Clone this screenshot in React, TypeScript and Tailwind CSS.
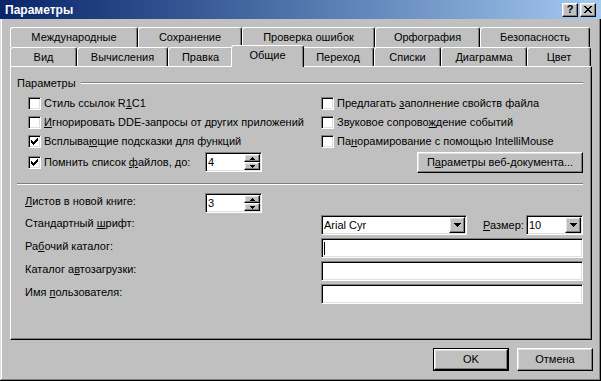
import React from "react";

const raised =
  "border border-t-white border-l-white border-r-black border-b-black shadow-[inset_-1px_-1px_#808080,inset_1px_1px_#dfdfdf]";
const sunken =
  "border border-t-[#808080] border-l-[#808080] border-r-white border-b-white shadow-[inset_1px_1px_#000,inset_-1px_-1px_#dfdfdf]";

function CheckMark() {
  const rects: [number, number, number][] = [
    [6, 0, 1],
    [5, 1, 2],
    [0, 2, 1],
    [4, 2, 3],
    [0, 3, 2],
    [3, 3, 3],
    [0, 4, 5],
    [1, 5, 3],
    [2, 6, 1],
  ];
  return (
    <svg width="7" height="7" viewBox="0 0 7 7" shapeRendering="crispEdges">
      {rects.map(([x, y, w], i) => (
        <rect key={i} x={x} y={y} width={w} height={1} fill="#000" />
      ))}
    </svg>
  );
}

function Check({ checked }: { checked?: boolean }) {
  return (
    <div className={`w-[13px] h-[13px] bg-white shrink-0 flex items-center justify-center ${sunken}`}>
      {checked && <CheckMark />}
    </div>
  );
}

function CheckRow({ checked, children }: { checked?: boolean; children: React.ReactNode }) {
  return (
    <div className="flex items-center gap-[3px] h-[19px]">
      <Check checked={checked} />
      <span className="whitespace-nowrap">{children}</span>
    </div>
  );
}

function TriUp() {
  return (
    <svg width="5" height="3" viewBox="0 0 5 3" shapeRendering="crispEdges">
      <rect x="2" y="0" width="1" height="1" fill="#000" />
      <rect x="1" y="1" width="3" height="1" fill="#000" />
      <rect x="0" y="2" width="5" height="1" fill="#000" />
    </svg>
  );
}
function TriDown() {
  return (
    <svg width="5" height="3" viewBox="0 0 5 3" shapeRendering="crispEdges">
      <rect x="0" y="0" width="5" height="1" fill="#000" />
      <rect x="1" y="1" width="3" height="1" fill="#000" />
      <rect x="2" y="2" width="1" height="1" fill="#000" />
    </svg>
  );
}
function BigTriDown() {
  return (
    <svg width="7" height="4" viewBox="0 0 7 4" shapeRendering="crispEdges">
      <rect x="0" y="0" width="7" height="1" fill="#000" />
      <rect x="1" y="1" width="5" height="1" fill="#000" />
      <rect x="2" y="2" width="3" height="1" fill="#000" />
      <rect x="3" y="3" width="1" height="1" fill="#000" />
    </svg>
  );
}

function Spin({ value }: { value: string }) {
  return (
    <div className={`w-[57px] h-[20px] bg-white flex p-[1px] shrink-0 ${sunken}`}>
      <div className="flex-1 pl-[1px] leading-[16px]">{value}</div>
      <div className="flex flex-col w-[16px]">
        <div className={`h-[8px] bg-[#c0c0c0] flex items-center justify-center ${raised}`}>
          <TriUp />
        </div>
        <div className={`h-[8px] bg-[#c0c0c0] flex items-center justify-center ${raised}`}>
          <TriDown />
        </div>
      </div>
    </div>
  );
}

function Combo({ value, w }: { value: string; w: string }) {
  return (
    <div className={`${w} h-[20px] bg-white flex p-[1px] shrink-0 ${sunken}`}>
      <div className="flex-1 pl-[1px] leading-[16px] whitespace-nowrap">{value}</div>
      <div className={`w-[16px] h-[16px] bg-[#c0c0c0] flex items-center justify-center ${raised}`}>
        <BigTriDown />
      </div>
    </div>
  );
}

function TextField({ caret }: { caret?: boolean }) {
  return (
    <div className={`w-[262px] h-[20px] bg-white flex items-center p-[1px] shrink-0 ${sunken}`}>
      {caret && <div className="ml-[1px] w-[1px] h-[13px] bg-black" />}
    </div>
  );
}

function Tab({
  w,
  children,
  h,
}: {
  w: string;
  h: string;
  children: React.ReactNode;
}) {
  return (
    <div
      className={`${w} ${h} shrink-0 bg-[#c0c0c0] flex items-center justify-center rounded-t-[3px] border-t border-l border-t-white border-l-white border-r border-r-black shadow-[inset_-1px_0_#808080] whitespace-nowrap`}
    >
      {children}
    </div>
  );
}

function Label({ w, children }: { w: string; children: React.ReactNode }) {
  return <div className={`${w} shrink-0 whitespace-nowrap pb-[4px]`}>{children}</div>;
}

export default function App() {
  return (
    <div className="w-[601px] h-[381px] bg-[#c0c0c0] text-black text-[11px] leading-[13px] font-['Liberation_Sans',Arial,sans-serif] flex flex-col shadow-[inset_-1px_-1px_#000,inset_1px_1px_#dfdfdf,inset_-2px_-2px_#808080,inset_2px_2px_#fff] overflow-hidden">
      {/* Title bar */}
      <div className="h-[19px] shrink-0 flex items-center bg-gradient-to-r from-[#0a246a] to-[#a6caf0] pl-[5px] pr-[5px]">
        <span className="text-white font-bold text-[12px] leading-[14px] flex-1">Параметры</span>
        <div className={`w-[16px] h-[14px] bg-[#c0c0c0] flex items-center justify-center ${raised}`}>
          <span className="font-bold text-[11px] leading-[11px]">?</span>
        </div>
        <div className={`ml-[2px] w-[16px] h-[14px] bg-[#c0c0c0] flex items-center justify-center ${raised}`}>
          <svg width="8" height="7" viewBox="0 0 8 7" shapeRendering="crispEdges">
            <path d="M0 0h2v1h-2zM6 0h2v1h-2zM1 1h2v1h-2zM5 1h2v1h-2zM2 2h4v1h-4zM3 3h2v1h-2zM2 4h4v1h-4zM1 5h2v1h-2zM5 5h2v1h-2zM0 6h2v1h-2zM6 6h2v1h-2z" fill="#000" />
          </svg>
        </div>
      </div>

      {/* Tabs row 1 */}
      <div className="mt-[8px] ml-[10px] flex h-[20px]">
        <Tab w="w-[128px]" h="h-[20px]">Международные</Tab>
        <Tab w="w-[104px]" h="h-[20px]">Сохранение</Tab>
        <Tab w="w-[133px]" h="h-[20px]">Проверка ошибок</Tab>
        <Tab w="w-[105px]" h="h-[20px]">Орфография</Tab>
        <Tab w="w-[110px]" h="h-[20px]">Безопасность</Tab>
      </div>
      {/* Tabs row 2 */}
      <div className="ml-[10px] flex items-end h-[19px]">
        <Tab w="w-[67px]" h="h-[19px]">Вид</Tab>
        <Tab w="w-[91px]" h="h-[19px]">Вычисления</Tab>
        <Tab w="w-[65px]" h="h-[19px]">Правка</Tab>
        <div className="relative z-10 -mx-[2px] mb-[-1px] w-[73px] h-[22px] shrink-0 bg-[#c0c0c0] flex items-start justify-center pt-[3px] rounded-t-[3px] border-t border-l border-t-white border-l-white border-r border-r-black shadow-[inset_-1px_0_#808080]">
          Общие
        </div>
        <Tab w="w-[72px]" h="h-[19px]">Переход</Tab>
        <Tab w="w-[67px]" h="h-[19px]">Списки</Tab>
        <Tab w="w-[86px]" h="h-[19px]">Диаграмма</Tab>
        <Tab w="w-[64px]" h="h-[19px]">Цвет</Tab>
      </div>

      {/* Panel */}
      <div className="ml-[10px] w-[582px] h-[274px] shrink-0 border border-t-white border-l-white border-r-black border-b-black shadow-[inset_-1px_-1px_#808080] flex flex-col">
        <div className="mt-[9px] flex items-center h-[14px] pl-[6px] pr-[8px]">
          <span>Параметры</span>
          <div className="flex-1 ml-[5px] h-[2px] border-t border-b border-t-[#808080] border-b-white" />
        </div>

        <div className="mt-[4px] flex pl-[17px] pr-[8px]">
          <div className="w-[293px] flex flex-col">
            <CheckRow>
              Стиль ссылок R<u>1</u>C1
            </CheckRow>
            <CheckRow>
              <u>И</u>гнорировать DDE-запросы от других приложений
            </CheckRow>
            <CheckRow checked>
              Всплыва<u>ю</u>щие подсказки для функций
            </CheckRow>
            <div className="flex items-center h-[22px]">
              <div className="w-[177px] flex items-center gap-[3px]">
                <Check checked />
                <span className="whitespace-nowrap">
                  Помнить список <u>ф</u>айлов, до:
                </span>
              </div>
              <Spin value="4" />
            </div>
          </div>
          <div className="flex-1 flex flex-col">
            <CheckRow>
              Предлагать <u>з</u>аполнение свойств файла
            </CheckRow>
            <CheckRow>
              Звуковое сопрово<u>ж</u>дение событий
            </CheckRow>
            <CheckRow>
              Па<u>н</u>орамирование с помощью IntelliMouse
            </CheckRow>
            <div className="flex items-center justify-end h-[22px]">
              <div className={`w-[166px] h-[21px] flex items-center justify-center ${raised}`}>
                П<u>а</u>раметры веб-документа...
              </div>
            </div>
          </div>
        </div>

        <div className="mt-[10px] ml-[6px] mr-[8px] h-[2px] border-t border-b border-t-[#808080] border-b-white" />

        <div className="flex flex-col pl-[14px] pr-[8px]">
          <div className="mt-[8px] flex items-center h-[20px]">
            <Label w="w-[180px]">
              <u>Л</u>истов в новой книге:
            </Label>
            <Spin value="3" />
          </div>
          <div className="mt-[2px] flex items-center h-[20px]">
            <Label w="w-[296px]">
              Стандартный <u>ш</u>рифт:
            </Label>
            <Combo value="Arial Cyr" w="w-[146px]" />
            <span className="ml-[16px] whitespace-nowrap">
              <u>Р</u>азмер:
            </span>
            <div className="ml-auto">
              <Combo value="10" w="w-[57px]" />
            </div>
          </div>
          <div className="mt-[3px] flex items-center h-[20px]">
            <Label w="w-[296px]">
              Ра<u>б</u>очий каталог:
            </Label>
            <TextField caret />
          </div>
          <div className="mt-[3px] flex items-center h-[20px]">
            <Label w="w-[296px]">
              Каталог а<u>в</u>тозагрузки:
            </Label>
            <TextField />
          </div>
          <div className="mt-[3px] flex items-center h-[20px]">
            <Label w="w-[296px]">
              Имя <u>п</u>ользователя:
            </Label>
            <TextField />
          </div>
        </div>
      </div>

      {/* Bottom buttons */}
      <div className="mt-[8px] flex justify-end gap-[8px] pr-[8px]">
        <div className="w-[76px] h-[23px] border border-black">
          <div className={`w-full h-full flex items-center justify-center ${raised}`}>OK</div>
        </div>
        <div className={`w-[76px] h-[23px] flex items-center justify-center ${raised}`}>Отмена</div>
      </div>
    </div>
  );
}
